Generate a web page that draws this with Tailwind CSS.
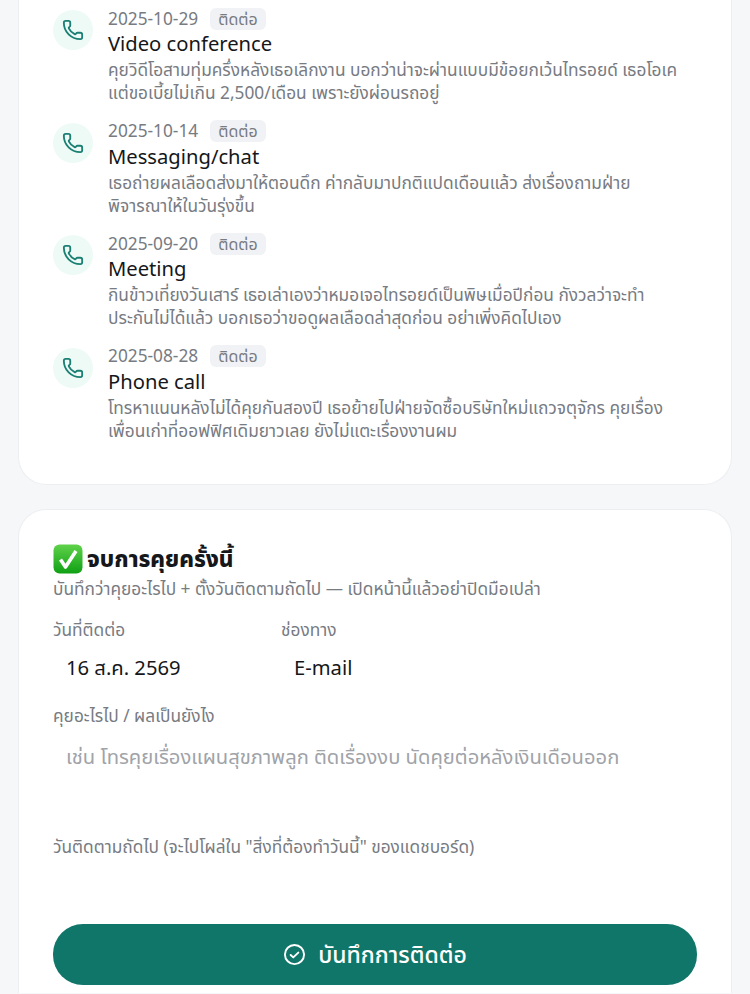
<!DOCTYPE html>
<html lang="th">
<head>
  <meta charset="UTF-8">
  <meta name="viewport" content="width=device-width, initial-scale=1.0">
  <title>บันทึกการติดต่อ</title>
  <script src="https://cdn.jsdelivr.net/npm/@tailwindcss/browser@4"></script>
</head>
<body class="bg-[#f6f7f9] font-['Noto_Sans','Noto_Sans_Thai',sans-serif] h-[994px] overflow-hidden">
  <div class="px-[18px] flex flex-col gap-[24px]">

    <!-- ประวัติการติดต่อ -->
    <section class="bg-white border border-[#eceef1] rounded-b-[28px] border-t-0 px-[34px] pt-[7px] h-[485px] flex flex-col gap-[20px]">

      <div class="flex gap-[15px] h-[92.5px]">
        <div class="w-[40px] h-[40px] mt-[3px] rounded-full bg-[#eefaf6] flex items-center justify-center shrink-0">
          <svg class="w-[22px] h-[22px] text-[#1b7f73]" viewBox="0 0 24 24" fill="none" stroke="currentColor" stroke-width="2" stroke-linecap="round" stroke-linejoin="round"><path d="M13.832 16.568a1 1 0 0 0 1.213-.303l.355-.465A2 2 0 0 1 17 15h3a2 2 0 0 1 2 2v3a2 2 0 0 1-2 2A18 18 0 0 1 2 4a2 2 0 0 1 2-2h3a2 2 0 0 1 2 2v3a2 2 0 0 1-.8 1.6l-.468.351a1 1 0 0 0-.292 1.233 14 14 0 0 0 6.392 6.384"/></svg>
        </div>
        <div class="min-w-0">
          <div class="flex items-center gap-[12px] h-[23px]">
            <span class="text-[17.3px] text-[#777b82]">2025-10-29</span>
            <span class="text-[16px] leading-[22px] h-[22px] px-[8px] rounded-[6px] bg-[#f1f2f5] text-[#777b82]">ติดต่อ</span>
          </div>
          <div class="text-[20.2px] leading-[27px] text-[#15171a]">Video conference</div>
          <p class="text-[17.3px] leading-[23px] mt-[1px] text-[#777b82] w-[580px]">คุยวิดีโอสามทุ่มครึ่งหลังเธอเลิกงาน บอกว่าน่าจะผ่านแบบมีข้อยกเว้นไทรอยด์ เธอโอเค แต่ขอเบี้ยไม่เกิน 2,500/เดือน เพราะยังผ่อนรถอยู่</p>
        </div>
      </div>

      <div class="flex gap-[15px] h-[92.5px]">
        <div class="w-[40px] h-[40px] mt-[3px] rounded-full bg-[#eefaf6] flex items-center justify-center shrink-0">
          <svg class="w-[22px] h-[22px] text-[#1b7f73]" viewBox="0 0 24 24" fill="none" stroke="currentColor" stroke-width="2" stroke-linecap="round" stroke-linejoin="round"><path d="M13.832 16.568a1 1 0 0 0 1.213-.303l.355-.465A2 2 0 0 1 17 15h3a2 2 0 0 1 2 2v3a2 2 0 0 1-2 2A18 18 0 0 1 2 4a2 2 0 0 1 2-2h3a2 2 0 0 1 2 2v3a2 2 0 0 1-.8 1.6l-.468.351a1 1 0 0 0-.292 1.233 14 14 0 0 0 6.392 6.384"/></svg>
        </div>
        <div class="min-w-0">
          <div class="flex items-center gap-[12px] h-[23px]">
            <span class="text-[17.3px] text-[#777b82]">2025-10-14</span>
            <span class="text-[16px] leading-[22px] h-[22px] px-[8px] rounded-[6px] bg-[#f1f2f5] text-[#777b82]">ติดต่อ</span>
          </div>
          <div class="text-[20.2px] leading-[27px] text-[#15171a]">Messaging/chat</div>
          <p class="text-[17.3px] leading-[23px] mt-[1px] text-[#777b82] w-[580px]">เธอถ่ายผลเลือดส่งมาให้ตอนดึก ค่ากลับมาปกติแปดเดือนแล้ว ส่งเรื่องถามฝ่ายพิจารณาให้ในวันรุ่งขึ้น</p>
        </div>
      </div>

      <div class="flex gap-[15px] h-[92.5px]">
        <div class="w-[40px] h-[40px] mt-[3px] rounded-full bg-[#eefaf6] flex items-center justify-center shrink-0">
          <svg class="w-[22px] h-[22px] text-[#1b7f73]" viewBox="0 0 24 24" fill="none" stroke="currentColor" stroke-width="2" stroke-linecap="round" stroke-linejoin="round"><path d="M13.832 16.568a1 1 0 0 0 1.213-.303l.355-.465A2 2 0 0 1 17 15h3a2 2 0 0 1 2 2v3a2 2 0 0 1-2 2A18 18 0 0 1 2 4a2 2 0 0 1 2-2h3a2 2 0 0 1 2 2v3a2 2 0 0 1-.8 1.6l-.468.351a1 1 0 0 0-.292 1.233 14 14 0 0 0 6.392 6.384"/></svg>
        </div>
        <div class="min-w-0">
          <div class="flex items-center gap-[12px] h-[23px]">
            <span class="text-[17.3px] text-[#777b82]">2025-09-20</span>
            <span class="text-[16px] leading-[22px] h-[22px] px-[8px] rounded-[6px] bg-[#f1f2f5] text-[#777b82]">ติดต่อ</span>
          </div>
          <div class="text-[20.2px] leading-[27px] text-[#15171a]">Meeting</div>
          <p class="text-[17.3px] leading-[23px] mt-[1px] text-[#777b82] w-[580px]">กินข้าวเที่ยงวันเสาร์ เธอเล่าเองว่าหมอเจอไทรอยด์เป็นพิษเมื่อปีก่อน กังวลว่าจะทำประกันไม่ได้แล้ว บอกเธอว่าขอดูผลเลือดล่าสุดก่อน อย่าเพิ่งคิดไปเอง</p>
        </div>
      </div>

      <div class="flex gap-[15px] h-[92.5px]">
        <div class="w-[40px] h-[40px] mt-[3px] rounded-full bg-[#eefaf6] flex items-center justify-center shrink-0">
          <svg class="w-[22px] h-[22px] text-[#1b7f73]" viewBox="0 0 24 24" fill="none" stroke="currentColor" stroke-width="2" stroke-linecap="round" stroke-linejoin="round"><path d="M13.832 16.568a1 1 0 0 0 1.213-.303l.355-.465A2 2 0 0 1 17 15h3a2 2 0 0 1 2 2v3a2 2 0 0 1-2 2A18 18 0 0 1 2 4a2 2 0 0 1 2-2h3a2 2 0 0 1 2 2v3a2 2 0 0 1-.8 1.6l-.468.351a1 1 0 0 0-.292 1.233 14 14 0 0 0 6.392 6.384"/></svg>
        </div>
        <div class="min-w-0">
          <div class="flex items-center gap-[12px] h-[23px]">
            <span class="text-[17.3px] text-[#777b82]">2025-08-28</span>
            <span class="text-[16px] leading-[22px] h-[22px] px-[8px] rounded-[6px] bg-[#f1f2f5] text-[#777b82]">ติดต่อ</span>
          </div>
          <div class="text-[20.2px] leading-[27px] text-[#15171a]">Phone call</div>
          <p class="text-[17.3px] leading-[23px] mt-[1px] text-[#777b82] w-[580px]">โทรหาแนนหลังไม่ได้คุยกันสองปี เธอย้ายไปฝ่ายจัดซื้อบริษัทใหม่แถวจตุจักร คุยเรื่องเพื่อนเก่าที่ออฟฟิศเดิมยาวเลย ยังไม่แตะเรื่องงานผม</p>
        </div>
      </div>
    </section>

    <!-- จบการคุยครั้งนี้ -->
    <section class="bg-white border border-[#eceef1] border-b-0 rounded-t-[28px] px-[34px] pt-[34px] h-[484px]">
      <h2 class="flex items-center gap-[4px] text-[22.5px] leading-[30px] font-extrabold text-[#15171a]">
        <svg class="w-[30px] h-[30px] shrink-0" viewBox="0 0 30 30">
          <defs>
            <linearGradient id="ok" x1="0" y1="0" x2="0" y2="1">
              <stop offset="0" stop-color="#5fd24a"/>
              <stop offset="1" stop-color="#0fa014"/>
            </linearGradient>
          </defs>
          <rect x="0.5" y="0.5" width="29" height="29" rx="6" fill="url(#ok)"/>
          <path d="M7.5 15.5l5 7.5L23 7" fill="none" stroke="#fff" stroke-width="3.6" stroke-linejoin="round"/>
        </svg>
        จบการคุยครั้งนี้
      </h2>
      <p class="text-[17.3px] leading-[24px] text-[#777b82] mt-[3px]">บันทึกว่าคุยอะไรไป + ตั้งวันติดตามถัดไป — เปิดหน้านี้แล้วอย่าปิดมือเปล่า</p>

      <div class="grid grid-cols-[228px_1fr] mt-[17px]">
        <div>
          <label class="block text-[17.3px] leading-[24px] text-[#777b82]">วันที่ติดต่อ</label>
          <div class="text-[20.2px] leading-[28px] text-[#15171a] px-[13px] mt-[11px]">16 ส.ค. 2569</div>
        </div>
        <div>
          <label class="block text-[17.3px] leading-[24px] text-[#777b82]">ช่องทาง</label>
          <div class="text-[20.2px] leading-[28px] text-[#15171a] px-[13px] mt-[11px]">E-mail</div>
        </div>
      </div>

      <label class="block text-[17.3px] leading-[24px] text-[#777b82] mt-[23px]">คุยอะไรไป / ผลเป็นยังไง</label>
      <div class="text-[20.2px] leading-[28px] text-[#a0a3a8] px-[13px] mt-[14px]">เช่น โทรคุยเรื่องแผนสุขภาพลูก ติดเรื่องงบ นัดคุยต่อหลังเงินเดือนออก</div>

      <label class="block text-[17.3px] leading-[24px] text-[#777b82] mt-[65px]">วันติดตามถัดไป (จะไปโผล่ใน "สิ่งที่ต้องทำวันนี้" ของแดชบอร์ด)</label>

      <button class="w-full h-[61px] mt-[65px] rounded-[30px] bg-[#11766a] text-white text-[23px] font-medium flex items-center justify-center gap-[12px]">
        <svg class="w-[23px] h-[23px]" viewBox="0 0 24 24" fill="none" stroke="currentColor" stroke-width="2" stroke-linecap="round" stroke-linejoin="round"><circle cx="12" cy="12" r="10"/><path d="M8 12.5l2.7 2.5L16 10"/></svg>
        บันทึกการติดต่อ
      </button>
    </section>
  </div>
</body>
</html>
